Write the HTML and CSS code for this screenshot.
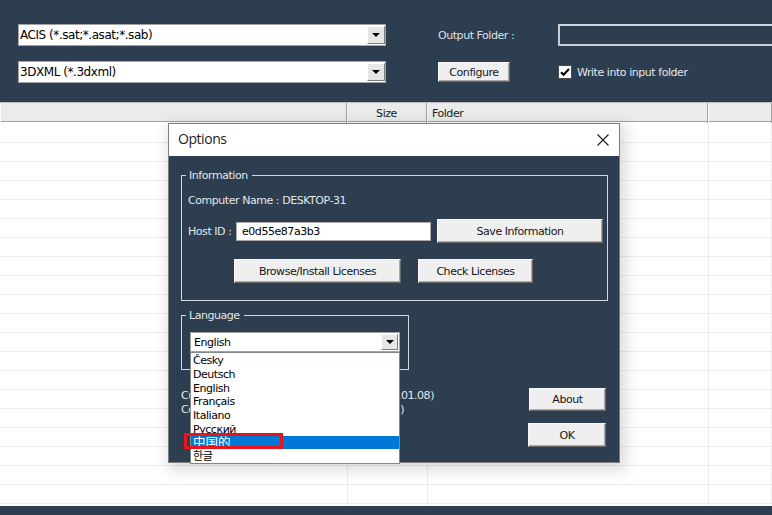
FILE: index.html
```html
<!DOCTYPE html>
<html lang="en">
<head>
<meta charset="utf-8">
<title>Converter - Options</title>
<link rel="stylesheet" href="styles.css">
</head>
<body>
<div class="app">
  <div class="toolbar">
    <div class="tb-grid">
      <div class="combo">
        <span class="combo-text">ACIS (*.sat;*.asat;*.sab)</span>
        <span class="combo-btn"><i class="tri"></i></span>
      </div>
      <div class="lbl">Output Folder :</div>
      <div class="outfield"></div>
      <div class="combo">
        <span class="combo-text">3DXML (*.3dxml)</span>
        <span class="combo-btn"><i class="tri"></i></span>
      </div>
      <div class="cfg-cell"><button class="btn cfg">Configure</button></div>
      <label class="chk">
        <span class="box"><svg width="12" height="12" viewBox="0 0 12 12"><path d="M2 6.2 L4.6 8.8 L10 3" fill="none" stroke="#000" stroke-width="2"/></svg></span>
        <span>Write into input folder</span>
      </label>
    </div>
  </div>

  <div class="table">
    <div class="thead">
      <div class="th"></div>
      <div class="th th-center">Size</div>
      <div class="th">Folder</div>
      <div class="th"></div>
    </div>
    <div class="tbody">
      <div class="row"><div class="td"></div><div class="td"></div><div class="td"></div><div class="td"></div></div>
      <div class="row"><div class="td"></div><div class="td"></div><div class="td"></div><div class="td"></div></div>
      <div class="row"><div class="td"></div><div class="td"></div><div class="td"></div><div class="td"></div></div>
      <div class="row"><div class="td"></div><div class="td"></div><div class="td"></div><div class="td"></div></div>
      <div class="row"><div class="td"></div><div class="td"></div><div class="td"></div><div class="td"></div></div>
      <div class="row"><div class="td"></div><div class="td"></div><div class="td"></div><div class="td"></div></div>
      <div class="row"><div class="td"></div><div class="td"></div><div class="td"></div><div class="td"></div></div>
      <div class="row"><div class="td"></div><div class="td"></div><div class="td"></div><div class="td"></div></div>
      <div class="row"><div class="td"></div><div class="td"></div><div class="td"></div><div class="td"></div></div>
      <div class="row"><div class="td"></div><div class="td"></div><div class="td"></div><div class="td"></div></div>
      <div class="row"><div class="td"></div><div class="td"></div><div class="td"></div><div class="td"></div></div>
      <div class="row"><div class="td"></div><div class="td"></div><div class="td"></div><div class="td"></div></div>
      <div class="row"><div class="td"></div><div class="td"></div><div class="td"></div><div class="td"></div></div>
      <div class="row"><div class="td"></div><div class="td"></div><div class="td"></div><div class="td"></div></div>
      <div class="row"><div class="td"></div><div class="td"></div><div class="td"></div><div class="td"></div></div>
      <div class="row"><div class="td"></div><div class="td"></div><div class="td"></div><div class="td"></div></div>
      <div class="row"><div class="td"></div><div class="td"></div><div class="td"></div><div class="td"></div></div>
      <div class="row"><div class="td"></div><div class="td"></div><div class="td"></div><div class="td"></div></div>
      <div class="row"><div class="td"></div><div class="td"></div><div class="td"></div><div class="td"></div></div>
      <div class="row"><div class="td"></div><div class="td"></div><div class="td"></div><div class="td"></div></div>
      <div class="row"><div class="td"></div><div class="td"></div><div class="td"></div><div class="td"></div></div>
    </div>
  </div>
  <div class="statusbar"></div>

  <div class="dialog">
    <div class="dlg-title">
      <span class="dlg-caption">Options</span>
      <svg class="close" width="12" height="12" viewBox="0 0 12 12"><path d="M0.5 0.5 L11.5 11.5 M11.5 0.5 L0.5 11.5" stroke="#1a1a1a" stroke-width="1.1" fill="none"/></svg>
    </div>
    <div class="dlg-body">
      <fieldset class="group info">
        <legend>Information</legend>
        <div class="line">Computer Name : DESKTOP-31</div>
        <div class="host-row">
          <span class="host-label">Host ID :</span>
          <span class="text-input">e0d55e87a3b3</span>
          <button class="btn save">Save Information</button>
        </div>
        <div class="lic-row">
          <button class="btn browse">Browse/Install Licenses</button>
          <button class="btn check">Check Licenses</button>
        </div>
      </fieldset>

      <div class="lower">
        <div class="left-col">
          <fieldset class="group lang">
            <legend>Language</legend>
            <div class="lang-combo">
              <span class="lang-text">English</span>
              <span class="combo-btn small"><i class="tri"></i></span>
              <ul class="lang-list">
                <li>Česky</li>
                <li>Deutsch</li>
                <li>English</li>
                <li>Français</li>
                <li>Italiano</li>
                <li>Русский</li>
                <li class="sel cjk">中国的</li>
                <li>한글</li>
                <li class="annot" aria-hidden="true"></li>
              </ul>
            </div>
          </fieldset>
          <div class="version">
            <div class="vline v1"><span>Current Version :</span><span>5.2.0 (2021.01.08)</span></div>
            <div class="vline v2"><span>Copyright</span><span>© 2021 (All rights reserved)</span></div>
          </div>
        </div>
        <div class="right-col">
          <button class="btn about">About</button>
          <button class="btn ok">OK</button>
        </div>
      </div>
    </div>
  </div>
</div>
</body>
</html>
```
FILE: styles.css
```css
* { box-sizing: border-box; }
html, body { margin: 0; padding: 0; }
body {
  width: 772px;
  height: 515px;
  overflow: hidden;
  background: #fff;
  font-family: "DejaVu Sans", "Noto Sans CJK SC", "Noto Sans CJK KR", sans-serif;
  font-size: 11px;
  letter-spacing: -0.45px;
  color: #1a1a1a;
}
.app {
  position: relative;
  width: 772px;
  height: 515px;
  display: flex;
  flex-direction: column;
}

/* toolbar */
.toolbar {
  flex: none;
  height: 102px;
  background: #2c3e50;
  padding: 24px 0 0 18px;
}
.tb-grid {
  display: grid;
  grid-template-columns: 368px 68px 1fr;
  grid-auto-rows: 22px;
  column-gap: 52px;
  row-gap: 15px;
  align-items: center;
}
.combo {
  height: 22px;
  display: flex;
  background: #fff;
  border: 1px solid #a3a3a3;
  padding: 1px 0 1px 1px;
}
.combo-text {
  flex: 1;
  font-size: 12px;
  line-height: 18px;
  color: #000;
  white-space: nowrap;
  overflow: hidden;
}
.combo-btn {
  width: 18px;
  flex: none;
  background: #e6e6e6;
  border: 1px solid;
  border-color: #fff #7c7c7c #7c7c7c #fff;
  display: flex;
  align-items: center;
  justify-content: center;
}
.tri {
  width: 0;
  height: 0;
  border-left: 4px solid transparent;
  border-right: 4px solid transparent;
  border-top: 4px solid #000;
}
.lbl { color: #dde1e6; white-space: nowrap; }
.outfield {
  height: 22px;
  margin-right: -10px;
  border: 2px solid #c9cdd1;
  border-top-color: #d2d5d8;
}
.cfg-cell { display: flex; align-items: center; }
.chk {
  display: flex;
  align-items: center;
  gap: 5px;
  color: #e4e7ea;
  white-space: nowrap;
}
.box {
  width: 14px;
  height: 14px;
  flex: none;
  background: #fff;
  border: 1px solid #4b4b4b;
  display: flex;
  align-items: center;
  justify-content: center;
}

/* buttons */
.btn {
  font: inherit;
  letter-spacing: inherit;
  color: #151515;
  background: #efefef;
  border: 1px solid;
  border-color: #f6f6f6 #6a6a6a #6a6a6a #f6f6f6;
  box-shadow: inset -1px -1px 0 #a9a9a9;
  padding: 0;
  display: flex;
  align-items: center;
  justify-content: center;
  flex: none;
}
.cfg { width: 72px; height: 20px; }

/* table */
.table {
  flex: 1;
  display: flex;
  flex-direction: column;
  overflow: hidden;
}
.thead {
  flex: none;
  height: 20px;
  display: grid;
  grid-template-columns: 347px 80px 281px 1fr;
  background: #ebebeb;
  border-top: 1px solid #bdbdbd;
  border-bottom: 1px solid #a2a2a2;
}
.th {
  border-right: 1px solid #a0a0a0;
  box-shadow: inset 1px 0 0 #fafafa;
  line-height: 18px;
  padding: 2px 0 0 5px;
  color: #1a1a1a;
}
.th-center { text-align: center; padding-left: 0; }
.tbody {
  flex: 1;
  overflow: hidden;
  padding-top: 2px;
}
.row {
  height: 19px;
  display: grid;
  grid-template-columns: 348px 80px 281px 1fr;
  border-bottom: 1px solid #ececec;
}
.td { border-right: 1px solid #ededed; }
.statusbar { flex: none; height: 9px; background: #2c3e50; }

/* dialog */
.dialog {
  position: absolute;
  left: 168px;
  top: 123px;
  width: 452px;
  height: 340px;
  background: #2c3e50;
  border: 1px solid #7d7d7d;
  box-shadow: 3px 4px 14px 3px rgba(0, 0, 0, 0.14);
  display: flex;
  flex-direction: column;
  z-index: 5;
}
.dlg-title {
  flex: none;
  height: 32px;
  background: #fff;
  display: flex;
  align-items: center;
  justify-content: space-between;
  padding: 0 10px 0 9px;
}
.dlg-caption {
  font-family: "Open Sans", "Noto Sans", sans-serif;
  font-size: 14px;
  letter-spacing: -0.45px;
  color: #1b1b1b;
  margin-top: -3px;
}
.close { margin-top: -1px; }
.dlg-body {
  flex: 1;
  padding: 12px 11px 0 12px;
  color: #e4e7ea;
}
.group {
  margin: 0;
  min-width: 0;
  border: 1px solid #d3d7db;
}
.group legend {
  padding: 1px 4px 0 3px;
  line-height: 14px;
  color: #e4e7ea;
}
.info { padding: 9px 4px 17px 6px; }
.info legend { margin-left: -2px; }
.line { line-height: 14px; padding-top: 2px; }
.host-row {
  display: flex;
  align-items: center;
  height: 24px;
  margin-top: 11px;
}
.host-label { width: 48px; flex: none; }
.text-input {
  width: 195px;
  height: 19px;
  flex: none;
  background: #fff;
  border: 1px solid #a8a8a8;
  color: #000;
  padding-left: 5px;
  line-height: 17px;
}
.save { width: 166px; height: 24px; margin-left: 6px; }
.lic-row {
  display: flex;
  gap: 17px;
  margin: 16px 0 0 46px;
}
.browse { width: 167px; height: 24px; }
.check { width: 115px; height: 24px; }

.lower {
  display: flex;
  margin-top: 7px;
}
.left-col { width: 228px; flex: none; }
.lang { padding: 9px 8px 17px 8px; }
.lang legend { margin-left: -4px; }
.lang-combo {
  position: relative;
  width: 210px;
  height: 20px;
  display: flex;
  background: #fff;
  border: 1px solid #a3a3a3;
  padding: 1px 1px 1px 3px;
}
.lang-text {
  flex: 1;
  color: #000;
  line-height: 17px;
}
.combo-btn.small { width: 17px; }
.lang-list {
  position: absolute;
  left: -1px;
  top: 19px;
  width: 210px;
  height: 112px;
  margin: 0;
  padding: 0;
  list-style: none;
  background: #fff;
  border: 1px solid #828790;
  color: #000;
  z-index: 3;
}
.lang-list li {
  height: 13.75px;
  line-height: 15px;
  padding-left: 2px;
  white-space: nowrap;
}
.lang-list li.sel { background: #0078d7; color: #fff; }
.lang-list li.cjk { font-size: 12.5px; letter-spacing: 0; line-height: 14px; }
.lang-list li.annot {
  position: absolute;
  left: -7px;
  top: 80px;
  width: 99px;
  height: 16px;
  padding: 0;
  border: 3px solid #e8141c;
}
.version {
  margin-top: 19px;
  line-height: 14px;
  white-space: nowrap;
}
.vline { display: flex; justify-content: space-between; }
.v1 { width: 253px; }
.v2 { width: 223px; }
.right-col {
  margin-left: auto;
  margin-right: 2px;
  margin-top: 80px;
  display: flex;
  flex-direction: column;
  align-items: flex-end;
  gap: 12px;
}
.about { width: 77px; height: 23px; }
.ok { width: 78px; height: 24px; }
```
